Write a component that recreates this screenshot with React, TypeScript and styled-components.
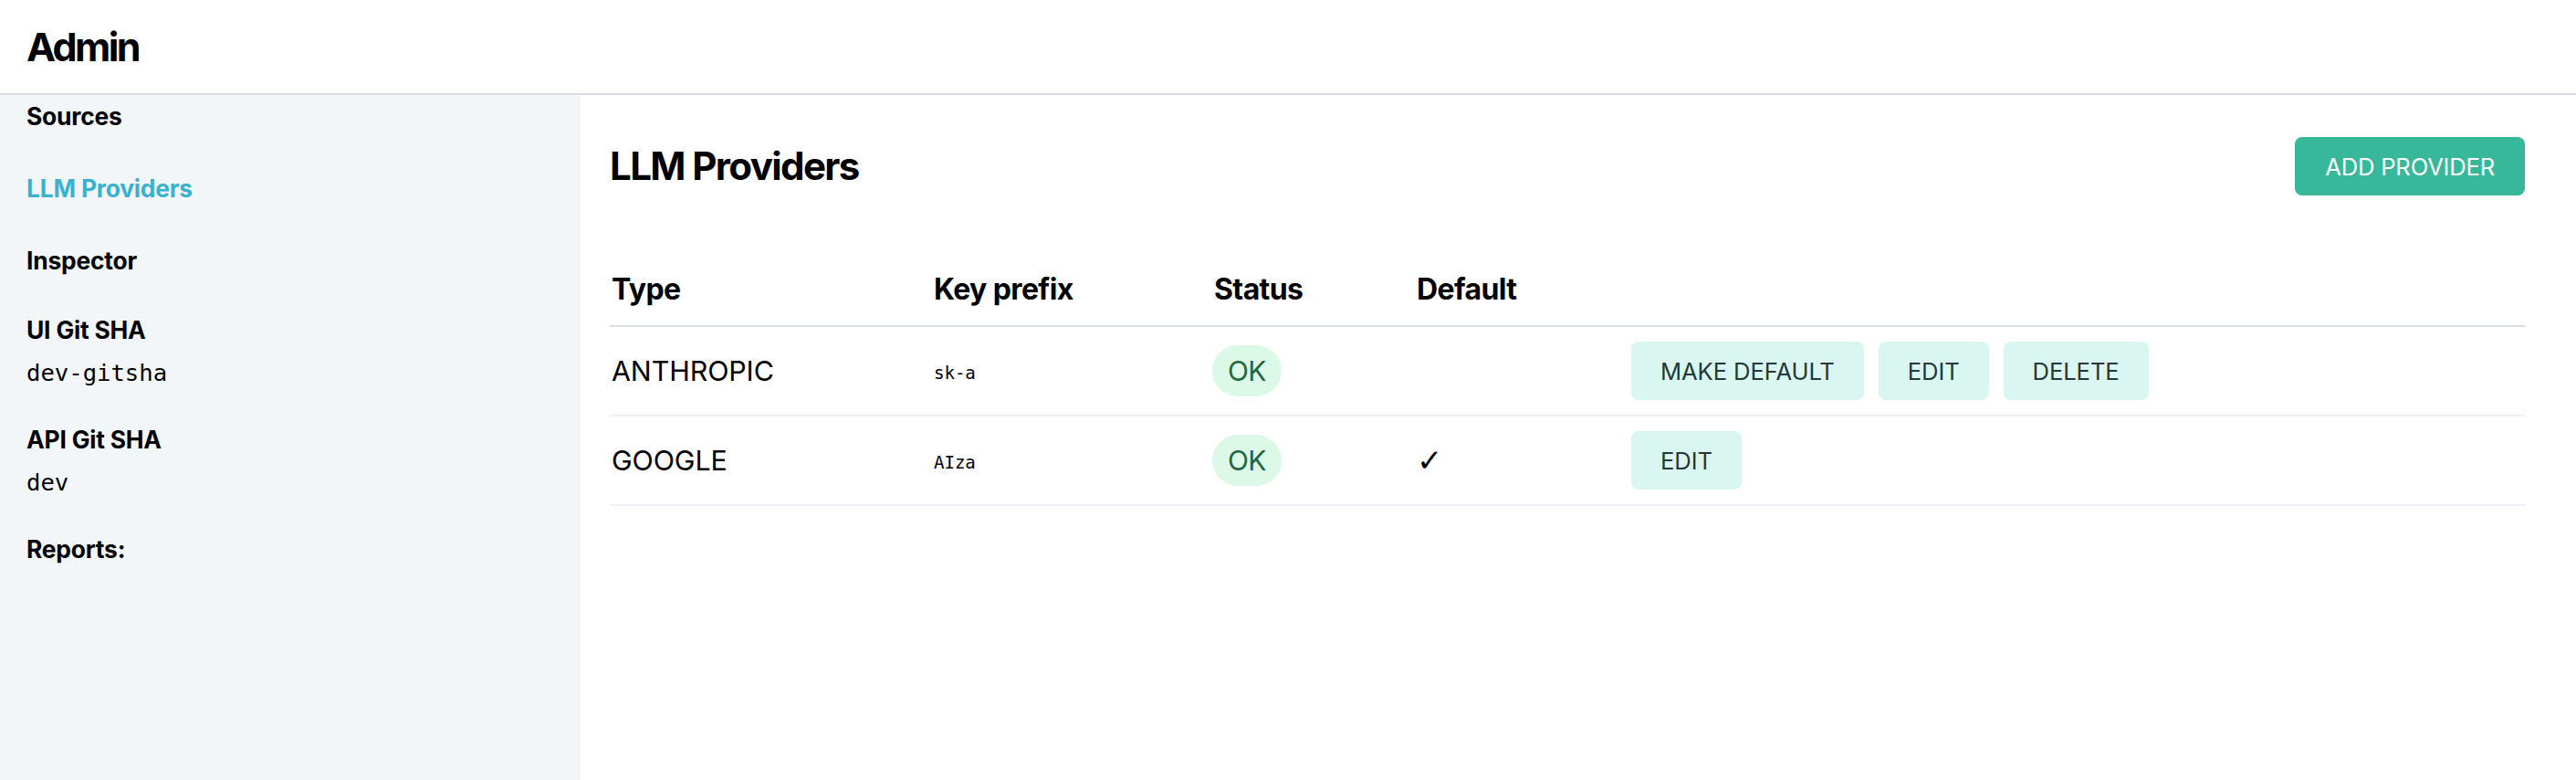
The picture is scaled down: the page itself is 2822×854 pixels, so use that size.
import * as React from "react";
import styled, { createGlobalStyle } from "styled-components";

const GlobalStyle = createGlobalStyle`
  html, body {
    margin: 0;
    padding: 0;
    height: 100%;
    background: #ffffff;
  }
  body {
    font-family: Inter, "Noto Sans", "Liberation Sans", sans-serif;
    color: #000000;
  }
  #root {
    height: 100%;
  }
`;

const Page = styled.div`
  display: flex;
  flex-direction: column;
  height: 100vh;
`;

const TopBar = styled.header`
  display: flex;
  align-items: center;
  height: 102px;
  padding: 0 29px;
  border-bottom: 2px solid #d9dde2;
  flex-shrink: 0;
`;

const Brand = styled.h1`
  margin: 0;
  font-size: 43px;
  font-weight: 700;
  letter-spacing: -2.6px;
  line-height: 1;
`;

const Body = styled.div`
  display: flex;
  flex: 1;
  min-height: 0;
`;

const Sidebar = styled.nav`
  width: 636px;
  flex-shrink: 0;
  background: #f3f6f9;
  padding: 4px 29px;
  box-sizing: border-box;
  display: flex;
  flex-direction: column;
`;

const NavList = styled.div`
  display: flex;
  flex-direction: column;
  gap: 41px;
`;

const NavLink = styled.a<{ $active?: boolean }>`
  font-size: 26.4px;
  font-weight: 700;
  line-height: 38px;
  letter-spacing: -0.2px;
  color: ${(p) => (p.$active ? "#3bb1d0" : "#000000")};
  text-decoration: none;
  cursor: pointer;
`;

const InfoList = styled.div`
  display: flex;
  flex-direction: column;
  gap: 35px;
  margin-top: 38px;
`;

const InfoBlock = styled.div`
  display: flex;
  flex-direction: column;
  gap: 9px;
`;

const InfoLabel = styled.div`
  font-size: 26.4px;
  font-weight: 700;
  line-height: 38px;
  letter-spacing: -0.2px;
`;

const InfoValue = styled.code`
  font-family: "DejaVu Sans Mono", "Liberation Mono", monospace;
  font-size: 25.6px;
  line-height: 38px;
`;

const Main = styled.main`
  flex: 1;
  padding: 46px 56px 0 32px;
  display: flex;
  flex-direction: column;
  gap: 64px;
`;

const TitleRow = styled.div`
  display: flex;
  align-items: center;
  justify-content: space-between;
  height: 64px;
`;

const Title = styled.h2`
  margin: 0;
  font-size: 42px;
  font-weight: 700;
  letter-spacing: -1.6px;
  line-height: 1;
`;

const PrimaryButton = styled.button`
  height: 64px;
  padding: 0 33px;
  border: none;
  border-radius: 8px;
  background: #38b89a;
  color: #ffffff;
  font-family: Inter, "Liberation Sans", sans-serif;
  font-size: 25.6px;
  font-weight: 400;
  letter-spacing: -0.2px;
  cursor: pointer;
`;

const Table = styled.div`
  display: flex;
  flex-direction: column;
`;

const Row = styled.div<{ $head?: boolean }>`
  display: grid;
  grid-template-columns: 353px 307px 222px 237px 1fr;
  align-items: center;
  border-bottom: 2px solid ${(p) => (p.$head ? "#d9dee3" : "#edf1f5")};
  min-height: ${(p) => (p.$head ? "78px" : "96px")};
`;

const HeadCell = styled.div`
  padding: 0 2px;
  font-size: 32px;
  font-weight: 700;
  letter-spacing: -0.6px;
  line-height: 48px;
`;

const Cell = styled.div`
  padding: 0 2px;
  font-size: 30.4px;
  font-weight: 400;
  letter-spacing: -0.1px;
  line-height: 44px;
`;

const KeyPrefix = styled.code`
  font-family: "DejaVu Sans Mono", "Liberation Mono", monospace;
  font-size: 19.2px;
`;

const Badge = styled.span`
  display: inline-flex;
  align-items: center;
  height: 56px;
  padding: 0 17px;
  border-radius: 9999px;
  background: #dcf8e6;
  color: #22673e;
  font-size: 30px;
  letter-spacing: -0.6px;
  margin-left: -2px;
`;

const Check = styled.span`
  font-family: "DejaVu Sans", sans-serif;
  font-size: 34px;
  font-weight: 300;
`;

const Actions = styled.div`
  display: flex;
  gap: 16px;
`;

const SoftButton = styled.button`
  height: 64px;
  padding: 0 32px;
  border: none;
  border-radius: 8px;
  background: #d9f6f0;
  color: #26373a;
  font-family: Inter, "Liberation Sans", sans-serif;
  font-size: 25.6px;
  font-weight: 400;
  letter-spacing: -0.1px;
  cursor: pointer;
`;

type Provider = {
  type: string;
  prefix: string;
  status: string;
  isDefault: boolean;
};

const providers: Provider[] = [
  { type: "ANTHROPIC", prefix: "sk-a", status: "OK", isDefault: false },
  { type: "GOOGLE", prefix: "AIza", status: "OK", isDefault: true },
];

export default function App() {
  return (
    <Page>
      <GlobalStyle />
      <TopBar>
        <Brand>Admin</Brand>
      </TopBar>
      <Body>
        <Sidebar>
          <NavList>
            <NavLink>Sources</NavLink>
            <NavLink $active>LLM Providers</NavLink>
            <NavLink>Inspector</NavLink>
          </NavList>
          <InfoList>
            <InfoBlock>
              <InfoLabel>UI Git SHA</InfoLabel>
              <InfoValue>dev-gitsha</InfoValue>
            </InfoBlock>
            <InfoBlock>
              <InfoLabel>API Git SHA</InfoLabel>
              <InfoValue>dev</InfoValue>
            </InfoBlock>
            <InfoBlock>
              <InfoLabel>Reports:</InfoLabel>
            </InfoBlock>
          </InfoList>
        </Sidebar>
        <Main>
          <TitleRow>
            <Title>LLM Providers</Title>
            <PrimaryButton>ADD PROVIDER</PrimaryButton>
          </TitleRow>
          <Table>
            <Row $head>
              <HeadCell>Type</HeadCell>
              <HeadCell>Key prefix</HeadCell>
              <HeadCell>Status</HeadCell>
              <HeadCell>Default</HeadCell>
              <HeadCell />
            </Row>
            {providers.map((p) => (
              <Row key={p.type}>
                <Cell>{p.type}</Cell>
                <Cell>
                  <KeyPrefix>{p.prefix}</KeyPrefix>
                </Cell>
                <Cell>
                  <Badge>{p.status}</Badge>
                </Cell>
                <Cell>{p.isDefault ? <Check>✓</Check> : null}</Cell>
                <Actions>
                  {!p.isDefault && <SoftButton>MAKE DEFAULT</SoftButton>}
                  <SoftButton>EDIT</SoftButton>
                  {!p.isDefault && <SoftButton>DELETE</SoftButton>}
                </Actions>
              </Row>
            ))}
          </Table>
        </Main>
      </Body>
    </Page>
  );
}
